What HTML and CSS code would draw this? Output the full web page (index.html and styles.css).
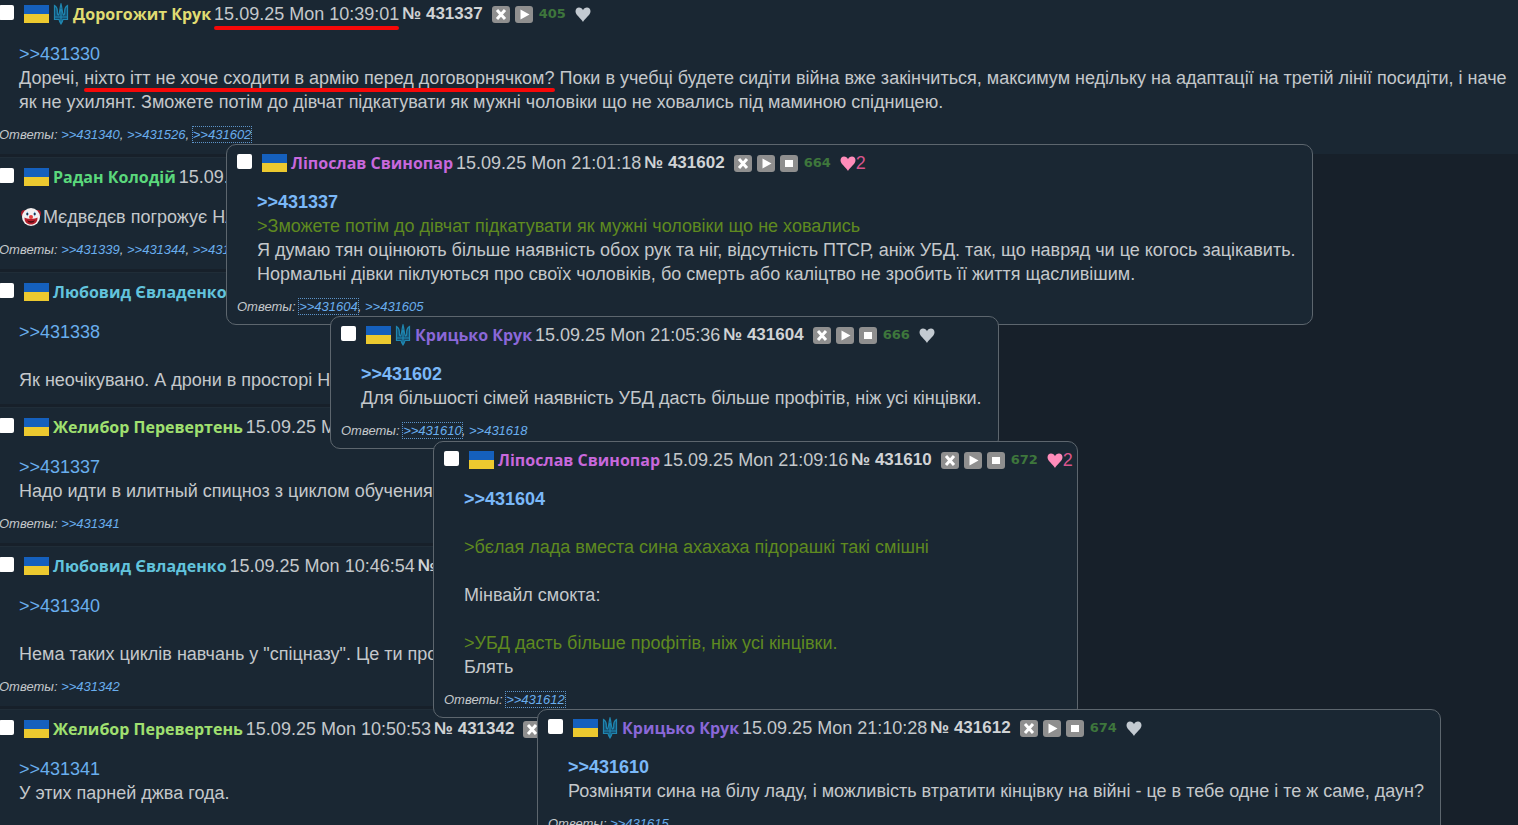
FILE: index.html
```html
<!DOCTYPE html>
<html lang="uk">
<head>
<meta charset="UTF-8">
<meta name="viewport" content="width=device-width, initial-scale=1.0">
<title>Thread 431330</title>
<link rel="stylesheet" href="styles.css">
</head>
<body>
<svg class="sprite" aria-hidden="true">
    <symbol id="flag" viewBox="0 0 25 18">
        <rect width="25" height="9" fill="#1560bd"/>
        <rect y="9" width="25" height="9" fill="#ecc92f"/>
    </symbol>
    <symbol id="trident" viewBox="0 0 16 22">
        <path d="M1.500 2.500v14H6c.3 1.800 1 3 2 4.500 1-1.500 1.700-2.700 2-4.500h4.500v-14C12 4 11.500 6.500 11.700 9c.1 1.500-.2 2.600-1 3C9 10.500 9.300 5 8 1 6.700 5 7 10.500 5.300 12c-.8-.4-1.100-1.500-1-3 .2-2.500-.3-5-2.800-6.500z" fill="#164f70"/>
        <path d="M1.500 2.500v14H6c.3 1.800 1 3 2 4.500 1-1.500 1.700-2.700 2-4.500h4.500v-14C12 4 11.500 6.500 11.700 9c.1 1.500-.2 2.600-1 3C9 10.500 9.300 5 8 1 6.700 5 7 10.500 5.300 12c-.8-.4-1.100-1.500-1-3 .2-2.500-.3-5-2.800-6.500zM8 6v14M2 14h12" fill="none" stroke="#1f86b0" stroke-width="1.200"/>
    </symbol>
    <symbol id="close" viewBox="0 0 18 17">
        <rect width="18" height="17" rx="3" fill="#8f8f8f"/>
        <path d="M5 4l8 9m0-9l-8 9" stroke="#fff" stroke-width="3"/>
    </symbol>
    <symbol id="play" viewBox="0 0 18 17">
        <rect width="18" height="17" rx="3" fill="#8f8f8f"/>
        <path d="M5.500 3.500l9 5-9 5z" fill="#fff"/>
    </symbol>
    <symbol id="stop" viewBox="0 0 18 17">
        <rect width="18" height="17" rx="3" fill="#8f8f8f"/>
        <rect x="5" y="5" width="8" height="7" fill="#fff"/>
    </symbol>
    <symbol id="heart" viewBox="0 0 16 15">
        <path d="M8 15C6.500 11.500.5 8.500.5 4.300.5 2 2 .5 4 .5c1.900 0 3.300 1 4 2.800C8.700 1.500 10.100.5 12 .5c2 0 3.500 1.500 3.500 3.800C15.500 8.500 9.500 11.500 8 15z" fill="currentColor"/>
    </symbol>
    <symbol id="clown" viewBox="0 0 20 20">
        <circle cx="3.500" cy="6.500" r="3.500" fill="#a81c2a"/>
        <circle cx="16.500" cy="6.500" r="3.500" fill="#a81c2a"/>
        <circle cx="10" cy="10" r="9" fill="#f4efef"/>
        <path d="M6.300 4.500L7.600 7 6.300 9.500 5 7zM13.700 4.500L15 7l-1.300 2.500L12.400 7z" fill="#58a8d8"/>
        <circle cx="6.300" cy="7" r="1" fill="#223"/>
        <circle cx="13.700" cy="7" r="1" fill="#223"/>
        <path d="M3.500 10.500c2 1.700 11 1.700 13 0 .3 4.500-2.700 7-6.500 7s-6.800-2.500-6.500-7z" fill="#b51f2c"/>
        <path d="M6 13.300q4 1.700 8 0-1 2.500-4 2.500t-4-2.500z" fill="#4d0b12"/>
        <circle cx="10" cy="10" r="2" fill="#e23b3b"/>
    </symbol>
</svg>

<main class="thread">
    <article class="post post-wide">
        <header class="post-header">
            <input type="checkbox" aria-label="431337">
            <svg class="flag"><use href="#flag"/></svg>
            <svg class="trident"><use href="#trident"/></svg>
            <span class="name yellow">Дорогожит Крук</span>
            <time class="marked">15.09.25 Mon 10:39:01</time>
            <b class="number">№ 431337</b>
            <span class="tools">
                <button aria-label="Hide"><svg><use href="#close"/></svg></button>
                <button aria-label="Reply"><svg><use href="#play"/></svg></button>
            </span>
            <span class="count">405</span>
            <button class="like" aria-label="Like"><svg><use href="#heart"/></svg></button>
        </header>
        <div class="message">
            <a href="#431330">&gt;&gt;431330</a><br>
            Доречі, <span class="marked">ніхто ітт не хоче сходити в армію перед договорнячком?</span> Поки в учебці будете сидіти війна вже закінчиться, максимум недільку на адаптації на третій лінії посидіти, і наче як не ухилянт. Зможете потім до дівчат підкатувати як мужні чоловіки що не ховались під маминою спідницею.
        </div>
        <div class="replies">Ответы: <a href="#431340">&gt;&gt;431340</a>, <a href="#431526">&gt;&gt;431526</a>, <a class="open" href="#431602">&gt;&gt;431602</a></div>
    </article>

    <article class="post">
        <header class="post-header">
            <input type="checkbox" aria-label="431338">
            <svg class="flag"><use href="#flag"/></svg>
            <span class="name green">Радан Колодій</span>
            <time>15.09.25 Mon 10:41:22</time>
            <b class="number">№ 431338</b>
        </header>
        <div class="message"><svg class="clown"><use href="#clown"/></svg>Мєдвєдєв погрожує НАТО</div>
        <div class="replies">Ответы: <a href="#431339">&gt;&gt;431339</a>, <a href="#431344">&gt;&gt;431344</a>, <a href="#431345">&gt;&gt;431345</a></div>
    </article>

    <article class="post">
        <header class="post-header">
            <input type="checkbox" aria-label="431339">
            <svg class="flag"><use href="#flag"/></svg>
            <span class="name cyan">Любовид Євладенко</span>
            <time>15.09.25 Mon 10:43:10</time>
            <b class="number">№ 431339</b>
        </header>
        <div class="message">
            <a href="#431338">&gt;&gt;431338</a><br>
            <br>
            Як неочікувано. А дрони в просторі НАТО
        </div>
    </article>

    <article class="post">
        <header class="post-header">
            <input type="checkbox" aria-label="431340">
            <svg class="flag"><use href="#flag"/></svg>
            <span class="name lime">Желибор Перевертень</span>
            <time>15.09.25 Mon 10:45:02</time>
            <b class="number">№ 431340</b>
        </header>
        <div class="message">
            <a href="#431337">&gt;&gt;431337</a><br>
            Надо идти в илитный спицноз з циклом обучения в
        </div>
        <div class="replies">Ответы: <a href="#431341">&gt;&gt;431341</a></div>
    </article>

    <article class="post">
        <header class="post-header">
            <input type="checkbox" aria-label="431341">
            <svg class="flag"><use href="#flag"/></svg>
            <span class="name cyan">Любовид Євладенко</span>
            <time>15.09.25 Mon 10:46:54</time>
            <b class="number">№ 431341</b>
        </header>
        <div class="message">
            <a href="#431340">&gt;&gt;431340</a><br>
            <br>
            Нема таких циклів навчань у "спіцназу". Це ти про
        </div>
        <div class="replies">Ответы: <a href="#431342">&gt;&gt;431342</a></div>
    </article>

    <article class="post">
        <header class="post-header">
            <input type="checkbox" aria-label="431342">
            <svg class="flag"><use href="#flag"/></svg>
            <span class="name lime">Желибор Перевертень</span>
            <time>15.09.25 Mon 10:50:53</time>
            <b class="number">№ 431342</b>
            <span class="tools">
                <button aria-label="Hide"><svg><use href="#close"/></svg></button>
                <button aria-label="Reply"><svg><use href="#play"/></svg></button>
            </span>
        </header>
        <div class="message">
            <a href="#431341">&gt;&gt;431341</a><br>
            У этих парней джва года.<br>
            <br>
        </div>
    </article>
</main>

<article class="post popup popup-1">
    <header class="post-header">
        <input type="checkbox" aria-label="431602">
        <svg class="flag"><use href="#flag"/></svg>
        <span class="name pink">Ліпослав Свинопар</span>
        <time>15.09.25 Mon 21:01:18</time>
        <b class="number">№ 431602</b>
        <span class="tools">
            <button aria-label="Hide"><svg><use href="#close"/></svg></button>
            <button aria-label="Reply"><svg><use href="#play"/></svg></button>
            <button aria-label="Stop"><svg><use href="#stop"/></svg></button>
        </span>
        <span class="count">664</span>
        <button class="like liked"><svg><use href="#heart"/></svg>2</button>
    </header>
    <div class="message">
        <a class="source" href="#431337">&gt;&gt;431337</a><br>
        <span class="quote">&gt;Зможете потім до дівчат підкатувати як мужні чоловіки що не ховались</span><br>
        Я думаю тян оцінюють більше наявність обох рук та ніг, відсутність ПТСР, аніж УБД. так, що навряд чи це когось зацікавить.<br>
        Нормальні дівки піклуються про своїх чоловіків, бо смерть або каліцтво не зробить її життя щасливішим.
    </div>
    <div class="replies">Ответы: <a class="open" href="#431604">&gt;&gt;431604</a>, <a href="#431605">&gt;&gt;431605</a></div>
</article>

<article class="post popup popup-2">
    <header class="post-header">
        <input type="checkbox" aria-label="431604">
        <svg class="flag"><use href="#flag"/></svg>
        <svg class="trident"><use href="#trident"/></svg>
        <span class="name violet">Крицько Крук</span>
        <time>15.09.25 Mon 21:05:36</time>
        <b class="number">№ 431604</b>
        <span class="tools">
            <button aria-label="Hide"><svg><use href="#close"/></svg></button>
            <button aria-label="Reply"><svg><use href="#play"/></svg></button>
            <button aria-label="Stop"><svg><use href="#stop"/></svg></button>
        </span>
        <span class="count">666</span>
        <button class="like" aria-label="Like"><svg><use href="#heart"/></svg></button>
    </header>
    <div class="message">
        <a class="source" href="#431602">&gt;&gt;431602</a><br>
        Для більшості сімей наявність УБД дасть більше профітів, ніж усі кінцівки.
    </div>
    <div class="replies">Ответы: <a class="open" href="#431610">&gt;&gt;431610</a>, <a href="#431618">&gt;&gt;431618</a></div>
</article>

<article class="post popup popup-3">
    <header class="post-header">
        <input type="checkbox" aria-label="431610">
        <svg class="flag"><use href="#flag"/></svg>
        <span class="name pink">Ліпослав Свинопар</span>
        <time>15.09.25 Mon 21:09:16</time>
        <b class="number">№ 431610</b>
        <span class="tools">
            <button aria-label="Hide"><svg><use href="#close"/></svg></button>
            <button aria-label="Reply"><svg><use href="#play"/></svg></button>
            <button aria-label="Stop"><svg><use href="#stop"/></svg></button>
        </span>
        <span class="count">672</span>
        <button class="like liked"><svg><use href="#heart"/></svg>2</button>
    </header>
    <div class="message">
        <a class="source" href="#431604">&gt;&gt;431604</a><br>
        <br>
        <span class="quote">&gt;бєлая лада вместа сина ахахаха підорашкі такі смішні</span><br>
        <br>
        Мінвайл смокта:<br>
        <br>
        <span class="quote">&gt;УБД дасть більше профітів, ніж усі кінцівки.</span><br>
        Блять
    </div>
    <div class="replies">Ответы: <a class="open" href="#431612">&gt;&gt;431612</a></div>
</article>

<article class="post popup popup-4">
    <header class="post-header">
        <input type="checkbox" aria-label="431612">
        <svg class="flag"><use href="#flag"/></svg>
        <svg class="trident"><use href="#trident"/></svg>
        <span class="name violet">Крицько Крук</span>
        <time>15.09.25 Mon 21:10:28</time>
        <b class="number">№ 431612</b>
        <span class="tools">
            <button aria-label="Hide"><svg><use href="#close"/></svg></button>
            <button aria-label="Reply"><svg><use href="#play"/></svg></button>
            <button aria-label="Stop"><svg><use href="#stop"/></svg></button>
        </span>
        <span class="count">674</span>
        <button class="like" aria-label="Like"><svg><use href="#heart"/></svg></button>
    </header>
    <div class="message">
        <a class="source" href="#431610">&gt;&gt;431610</a><br>
        Розміняти сина на білу ладу, і можливість втратити кінцівку на війні - це в тебе одне і те ж саме, даун?
    </div>
    <div class="replies">Ответы: <a href="#431615">&gt;&gt;431615</a></div>
</article>
</body>
</html>
```
FILE: styles.css
```css
body {
    margin: 0;
    height: 100vh;
    overflow: hidden;
    position: relative;
    background-color: #17202a;
    color: #c4c8cb;
    font-family: "Liberation Sans", Arial, sans-serif;
    font-size: 18px;
    line-height: 24px;
}
a {
    color: #69aeee;
    text-decoration: none;
}
button {
    display: flex;
    align-items: center;
    padding: 0;
    border: none;
    background: none;
    font: inherit;
    color: inherit;
    cursor: pointer;
}
.sprite {
    position: absolute;
    width: 0;
    height: 0;
}
.thread {
    display: flex;
    flex-direction: column;
    align-items: flex-start;
    gap: 3px;
    margin: -6px 0 0 -11px;
}
.post {
    box-sizing: border-box;
    padding-top: 5px;
    background-color: #1a2733;
    box-shadow: inset 0 1px #202d38;
}
.post-wide {
    align-self: stretch;
}
.post-header {
    display: flex;
    align-items: center;
    height: 30px;
    padding: 0 4px 0 10px;
    white-space: nowrap;
}
.post-header input {
    appearance: none;
    width: 15px;
    height: 15px;
    margin: 0 10px 4px 0;
    border-radius: 2px;
    background-color: #fff;
}
.flag {
    width: 25px;
    height: 18px;
    margin-right: 4px;
}
.trident {
    width: 16px;
    height: 22px;
    margin-right: 4px;
}
.name {
    margin-right: 3px;
    font-family: "Open Sans", "Noto Sans", sans-serif;
    font-size: 16px;
    font-weight: bold;
}
.yellow { color: #e0dc72; }
.green { color: #5bd87c; }
.cyan { color: #62c3dc; }
.lime { color: #a0e070; }
.pink { color: #c868dc; }
.violet { color: #8a68d8; }
.number {
    margin-left: 3px;
    font-size: 17px;
    color: #d0d3d5;
}
.tools {
    display: flex;
    gap: 5px;
    margin-left: 9px;
}
.tools svg {
    width: 18px;
    height: 17px;
}
.count {
    margin: 0 9px 0 6px;
    font-family: "DejaVu Sans", Verdana, sans-serif;
    font-size: 13px;
    font-weight: bold;
    color: #3e763c;
}
.like {
    color: #c3cad1;
}
.like svg {
    width: 16px;
    height: 15px;
}
.liked {
    color: #d8558c;
}
.liked svg {
    color: #ff8cba;
}
.message {
    margin: 13px 10px 12px 30px;
}
.source {
    font-weight: bold;
    color: #7ab8f8;
}
.quote {
    color: #5f8a20;
}
.clown {
    width: 20px;
    height: 20px;
    margin: 0 2px;
    vertical-align: -4px;
}
.replies {
    padding: 0 10px 10px;
    font-size: 13px;
    font-style: italic;
    line-height: 18px;
}
.open {
    outline: 1px dotted #5c93c8;
}

/* red marker lines */
.marked {
    position: relative;
}
.marked::after {
    content: "";
    position: absolute;
    left: 0;
    right: 0;
    bottom: -4px;
    height: 4px;
    border-radius: 2px;
    background-color: #f60808;
}

.popup {
    position: absolute;
    padding-top: 4px;
    border: 1px solid #5d666e;
    border-radius: 10px;
    box-shadow: none;
    white-space: nowrap;
}
.popup .post-header {
    height: 28px;
}
.popup .message {
    margin-right: 16px;
}
.popup .replies {
    padding-bottom: 8px;
}
.popup-1 { left: 226px; top: 144px; }
.popup-2 { left: 330px; top: 316px; }
.popup-3 { left: 433px; top: 441px; }
.popup-4 { left: 537px; top: 709px; }
```
